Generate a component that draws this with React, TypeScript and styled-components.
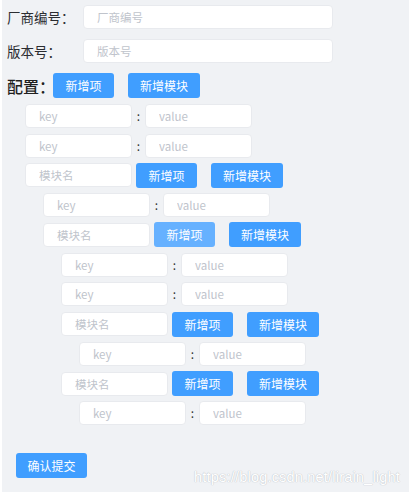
import React from "react";
import styled, { createGlobalStyle } from "styled-components";

const Global = createGlobalStyle`
  html, body { margin: 0; padding: 0; background: #ffffff; }
  body { font-family: "Noto Sans CJK SC", "Noto Sans", "Liberation Sans", sans-serif; }
  * { box-sizing: border-box; }
  input::placeholder { color: #c0c4cc; }
`;

const Page = styled.div`
  padding-left: 2px;
  width: 411px;
`;

const Panel = styled.div`
  position: relative;
  width: 407px;
  height: 492px;
  background: #f0f2f5;
  padding: 5px 0 0 4px;
`;

const FormRow = styled.div`
  display: flex;
  align-items: center;
  height: 24px;
  margin-bottom: 10px;
`;

const Label = styled.span<{ $big?: boolean }>`
  width: ${(p) => (p.$big ? "47px" : "77px")};
  padding-left: 1px;
  font-size: ${(p) => (p.$big ? "16px" : "13.5px")};
  font-weight: ${(p) => (p.$big ? 500 : 400)};
  color: ${(p) => (p.$big ? "#1f1f1f" : "#2b2d31")};
  white-space: nowrap;
`;

const Input = styled.input<{ $w: number }>`
  width: ${(p) => p.$w}px;
  height: 24px;
  border: 1px solid #e8eaee;
  border-radius: 4px;
  background: #ffffff;
  padding: 0 0 0 13px;
  font-size: 11.5px;
  font-family: inherit;
  color: #606266;
  outline: none;
`;

const Button = styled.button<{ $w: number; $hover?: boolean; $ml?: number }>`
  width: ${(p) => p.$w}px;
  height: 25px;
  margin-left: ${(p) => p.$ml ?? 0}px;
  border: none;
  border-radius: 3px;
  background: ${(p) => (p.$hover ? "#66b1ff" : "#409eff")};
  color: #ffffff;
  font-size: 12px;
  font-family: inherit;
  padding: 0;
  cursor: pointer;
`;

const ConfigHead = styled.div`
  display: flex;
  align-items: center;
  height: 25px;
  margin-top: 8px;
`;

const Children = styled.div<{ $indent: number }>`
  margin-left: ${(p) => p.$indent}px;
`;

const Line = styled.div`
  display: flex;
  align-items: center;
  height: 24px;
  margin-top: 5.75px;
`;

const Colon = styled.span`
  width: 13px;
  text-align: center;
  font-size: 12px;
  color: #303133;
  line-height: 24px;
`;

const ModuleBlock = styled.div`
  margin-bottom: 4.25px;
`;

const Submit = styled(Button)`
  margin-top: 28px;
  margin-left: 10px;
  display: block;
`;

const Watermark = styled.div`
  position: absolute;
  right: 9px;
  bottom: 7px;
  font-family: "Liberation Sans", Arial, sans-serif;
  font-size: 14.5px;
  color: #ffffff;
  text-shadow: 0 0 1px #bfc3c9, 0 0 1px #bfc3c9;
  letter-spacing: 0.2px;
`;

type Node =
  | { kind: "kv" }
  | { kind: "module"; hover?: boolean; children: Node[] };

const tree: Node[] = [
  { kind: "kv" },
  { kind: "kv" },
  {
    kind: "module",
    children: [
      { kind: "kv" },
      {
        kind: "module",
        hover: true,
        children: [
          { kind: "kv" },
          { kind: "kv" },
          { kind: "module", children: [{ kind: "kv" }] },
          { kind: "module", children: [{ kind: "kv" }] },
        ],
      },
    ],
  },
];

const KeyValue = () => (
  <Line>
    <Input $w={107} placeholder="key" />
    <Colon>:</Colon>
    <Input $w={107} placeholder="value" />
  </Line>
);

const Module = ({ node }: { node: Extract<Node, { kind: "module" }> }) => (
  <ModuleBlock>
    <Line>
      <Input $w={107} placeholder="模块名" />
      <Button $w={61} $ml={4} $hover={node.hover}>新增项</Button>
      <Button $w={72} $ml={14}>新增模块</Button>
    </Line>
    <Children $indent={18}>
      <NodeList nodes={node.children} />
    </Children>
  </ModuleBlock>
);

const NodeList = ({ nodes }: { nodes: Node[] }) => (
  <>
    {nodes.map((n, i) =>
      n.kind === "kv" ? <KeyValue key={i} /> : <Module key={i} node={n} />
    )}
  </>
);

export default function App() {
  return (
    <Page>
      <Global />
      <Panel>
        <FormRow>
          <Label>厂商编号：</Label>
          <Input $w={250} placeholder="厂商编号" />
        </FormRow>
        <FormRow>
          <Label>版本号：</Label>
          <Input $w={250} placeholder="版本号" />
        </FormRow>
        <ConfigHead>
          <Label $big>配置：</Label>
          <Button $w={61}>新增项</Button>
          <Button $w={72} $ml={14}>新增模块</Button>
        </ConfigHead>
        <Children $indent={19}>
          <NodeList nodes={tree} />
        </Children>
        <Submit $w={71}>确认提交</Submit>
        <Watermark>https://blog.csdn.net/lirain_light</Watermark>
      </Panel>
    </Page>
  );
}
